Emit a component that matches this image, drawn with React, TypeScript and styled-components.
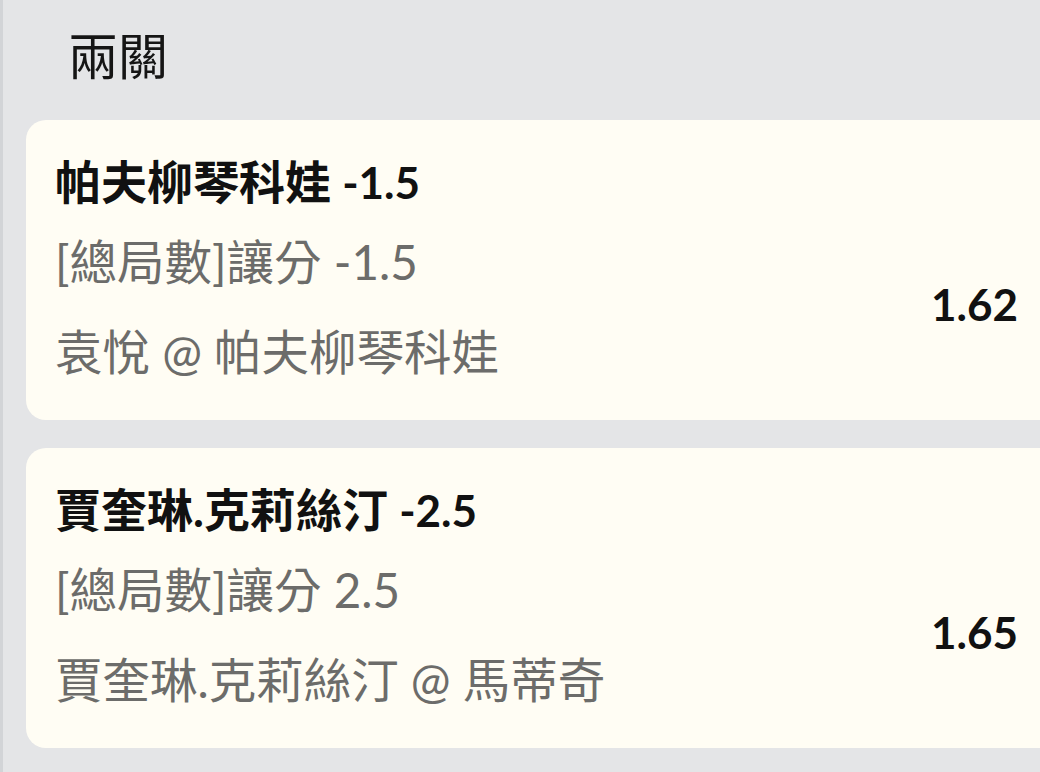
import React from 'react';
import styled, { createGlobalStyle } from 'styled-components';

type Bet = {
  pick: string;
  line: string;
  market: string;
  event: string;
  odds: string;
};

const bets: Bet[] = [
  {
    pick: '帕夫柳琴科娃',
    line: '-1.5',
    market: '[總局數]讓分 -1.5',
    event: '袁悅 @ 帕夫柳琴科娃',
    odds: '1.62',
  },
  {
    pick: '賈奎琳.克莉絲汀',
    line: '-2.5',
    market: '[總局數]讓分 2.5',
    event: '賈奎琳.克莉絲汀 @ 馬蒂奇',
    odds: '1.65',
  },
];

const GlobalStyle = createGlobalStyle`
  html, body {
    margin: 0;
    padding: 0;
    background: #e4e5e7;
    overflow: hidden;
  }
  body {
    font-family: Lato, 'Noto Sans CJK TC', sans-serif;
  }
`;

export default function App() {
  return (
    <>
      <GlobalStyle />
      <Page>
        <Header>兩關</Header>
        <List>
          {bets.map((bet) => (
            <Card key={bet.pick}>
              <Pick>
                {bet.pick} <Line>{bet.line}</Line>
              </Pick>
              <Body>
                <Details>
                  <Market>{bet.market}</Market>
                  <Market>{bet.event}</Market>
                </Details>
                <Odds>{bet.odds}</Odds>
              </Body>
            </Card>
          ))}
        </List>
      </Page>
    </>
  );
}

const Page = styled.div`
  min-height: 772px;
  border-left: 3px solid #d2d4d7;
  padding-left: 23px;
  box-sizing: border-box;
`;

const Header = styled.h1`
  margin: 0;
  height: 120px;
  box-sizing: border-box;
  padding: 0 0 14px 42px;
  display: flex;
  align-items: center;
  font-family: 'Noto Sans CJK TC', sans-serif;
  font-weight: 400;
  font-size: 50px;
  color: #151515;
`;

const List = styled.div`
  display: flex;
  flex-direction: column;
  gap: 28px;
  margin-right: -30px;
`;

const Card = styled.section`
  background: #fffdf4;
  border-radius: 20px;
  height: 300px;
  box-sizing: border-box;
  padding: 30px 52px 36px 29px;
`;

const Pick = styled.div`
  font-size: 46px;
  line-height: 64px;
  font-weight: 700;
  color: #111;
  white-space: nowrap;
`;

const Line = styled.span`
  font-size: 44px;
`;

const Body = styled.div`
  display: flex;
  align-items: center;
  justify-content: space-between;
  margin-top: 16px;
`;

const Details = styled.div`
  display: flex;
  flex-direction: column;
  gap: 26px;
`;

const Market = styled.div`
  font-size: 47.5px;
  line-height: 64px;
  color: #6c6c6a;
  white-space: nowrap;
`;

const Odds = styled.div`
  font-size: 44px;
  line-height: 64px;
  font-weight: 700;
  color: #111;
  margin-top: -6px;
`;
